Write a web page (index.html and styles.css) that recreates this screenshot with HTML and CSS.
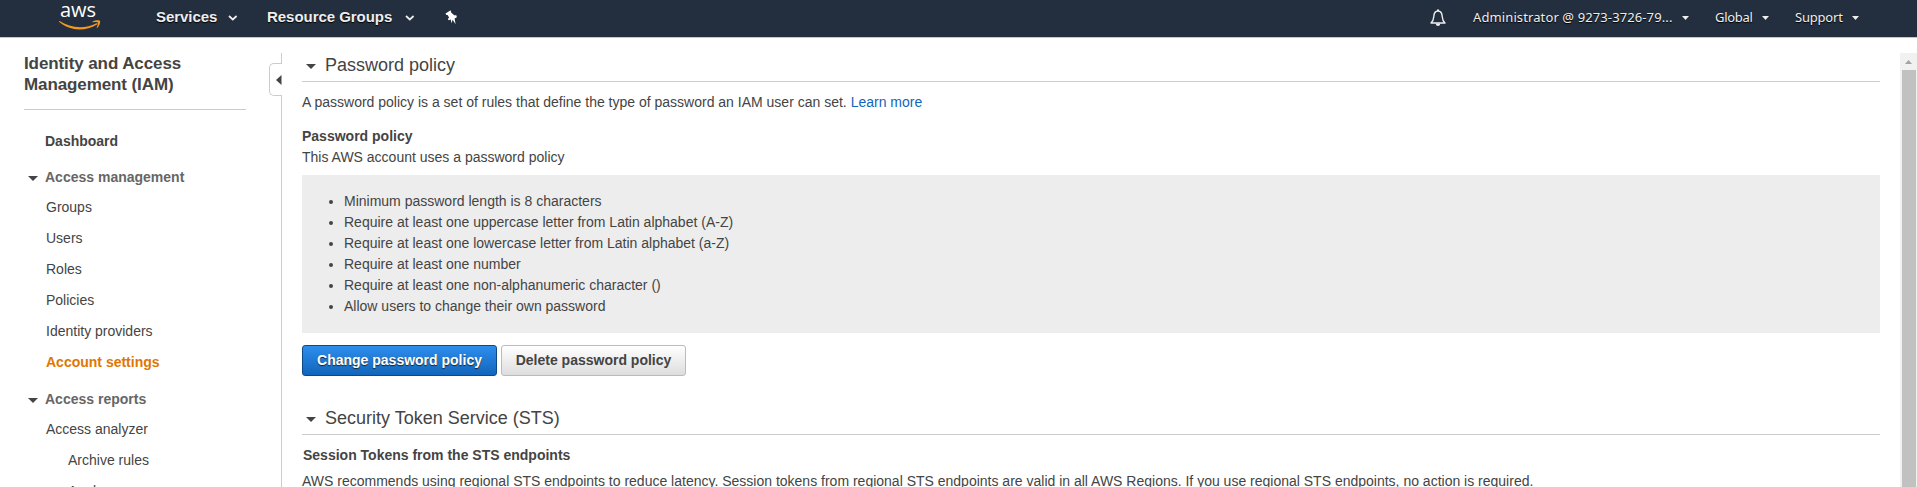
FILE: index.html
```html
<!DOCTYPE html>
<html lang="en">
<head>
<meta charset="utf-8">
<title>IAM Management Console</title>
<link rel="stylesheet" href="styles.css">
</head>
<body>
<header class="nav">
  <a class="logo">
    <span class="logo-text">aws</span>
    <svg class="logo-smile" width="42" height="11" viewBox="0 0 42 11"><path d="M.5 1.1C11 8 25.500 9.500 37.500 3.300C38.700 2.800 39 3.900 38 4.500C26 11.600 11 11.300.3 2.100C-.2 1.500 0 .8.500 1.100Z" fill="#f7981d"/><path d="M33.600 1.600C36 .2 40.200-.1 41 .9C41.500 2.300 40.600 5.800 38.200 7.900C37.800 8.200 37.500 8 37.700 7.500C38.400 5.800 39.300 3.300 38.800 2.600C38.200 1.900 35.700 2.100 34 2.300C33.400 2.400 33.200 1.900 33.600 1.600Z" fill="#f7981d"/></svg>
  </a>
  <a class="menu services">Services<svg class="chev" width="10" height="6" viewBox="0 0 10 6"><path d="M1 1l3.800 3.500L8.600 1" fill="none" stroke="#eee" stroke-width="1.700"/></svg></a>
  <a class="menu groups">Resource Groups<svg class="chev" width="10" height="6" viewBox="0 0 10 6"><path d="M1 1l3.800 3.500L8.600 1" fill="none" stroke="#eee" stroke-width="1.700"/></svg></a>
  <svg class="pin" width="13" height="15" viewBox="0 0 13 15"><path d="M5.300.5L.5 3.600L1.300 5L2.600 5L4.200 7.800L2.900 8.700L3.500 10.300L5.700 9.500L6.600 13.200L7.600 9.800L10.600 14.200L9.600 8.500L11.900 7.200L11.300 5.300L9.300 5.200L7.200 3.600L5.800 1.900L6.200 1Z" fill="#fff"/></svg>
  <div class="nav-right">
    <svg class="bell" width="16" height="18" viewBox="0 0 16 18"><path d="M1 14C3 12.300 3.600 10.500 3.800 7.500C4 3.900 5.500 2 8 2C10.500 2 12 3.900 12.200 7.500C12.400 10.500 13 12.300 15 14Z" fill="none" stroke="#eee" stroke-width="1.400" stroke-linejoin="round"/><path d="M7 2V.5h2V2M5.600 14.500h4.800Q10 17 8 17T5.600 14.500Z" fill="#eee"/></svg>
    <a class="item account">Administrator @ 9273-3726-79...<i class="caret"></i></a>
    <a class="item region">Global<i class="caret"></i></a>
    <a class="item support">Support<i class="caret"></i></a>
  </div>
</header>
<div class="layout">
  <aside class="sidebar">
    <h1>Identity and Access Management (IAM)</h1>
    <nav>
      <a class="strong dashboard">Dashboard</a>
      <a class="group first">Access management</a>
      <a>Groups</a>
      <a>Users</a>
      <a>Roles</a>
      <a>Policies</a>
      <a>Identity providers</a>
      <a class="active">Account settings</a>
      <a class="group">Access reports</a>
      <a>Access analyzer</a>
      <a class="sub">Archive rules</a>
      <a class="sub">Analyzers</a>
    </nav>
  </aside>
  <div class="divider"><button class="collapse" aria-label="Collapse"><svg width="6" height="10" viewBox="0 0 6 10"><path d="M0 5L5.500 0V10Z" fill="#444"/></svg></button></div>
  <main>
    <h2>Password policy</h2>
    <p class="intro">A password policy is a set of rules that define the type of password an IAM user can set. <a class="link">Learn more</a></p>
    <h3>Password policy</h3>
    <p class="uses">This AWS account uses a password policy</p>
    <ul>
      <li>Minimum password length is 8 characters</li>
      <li>Require at least one uppercase letter from Latin alphabet (A-Z)</li>
      <li>Require at least one lowercase letter from Latin alphabet (a-Z)</li>
      <li>Require at least one number</li>
      <li>Require at least one non-alphanumeric character ()</li>
      <li>Allow users to change their own password</li>
    </ul>
    <div class="buttons"><button class="btn primary">Change password policy</button><button class="btn">Delete password policy</button></div>
    <h2 class="sts">Security Token Service (STS)</h2>
    <h3 class="tokens">Session Tokens from the STS endpoints</h3>
    <p class="advice">AWS recommends using regional STS endpoints to reduce latency. Session tokens from regional STS endpoints are valid in all AWS Regions. If you use regional STS endpoints, no action is required.</p>
  </main>
  <div class="scrollbar"><svg width="17" height="17" viewBox="0 0 17 17"><path d="M5 11L8.500 7L12 11Z" fill="#a3a3a3"/></svg><div class="thumb"></div></div>
</div>
</body>
</html>
```

FILE: styles.css
```css
* { box-sizing: border-box; }
html, body { height: 100%; }
body {
  margin: 0;
  display: flex;
  flex-direction: column;
  overflow: hidden;
  background: #fff;
  color: #444;
  font: 14px/21px "Liberation Sans", Arial, sans-serif;
}
h1, h2, h3, p, ul { margin: 0; }

/* Top navigation */
.nav {
  flex: none;
  display: flex;
  height: 38px;
  background: #232f3e;
  border-bottom: 1px solid #c4c8cc;
  color: #eee;
}
.logo { display: flex; flex-direction: column; width: 97px; padding-left: 59px; }
.logo-text { height: 20px; padding-left: 1px; font: 20px/20px "Open Sans", sans-serif; color: #fff; }
.logo-smile { flex: none; }
.menu {
  display: flex;
  align-items: center;
  justify-content: space-between;
  height: 33px;
  font-size: 15px;
  font-weight: bold;
  letter-spacing: -.04px;
  text-shadow: 0 1px 1px #000;
  white-space: nowrap;
}
.services { margin-left: 59px; width: 111px; padding-right: 29px; }
.groups { width: 178px; padding-right: 30px; }
.chev { flex: none; margin-top: 3px; }
.pin { flex: none; margin-top: 10px; }
.nav-right {
  display: flex;
  margin-left: auto;
  font: 13px/35px "Noto Sans", sans-serif;
}
.bell { margin: 9px 27px 0 0; }
.item { display: flex; justify-content: space-between; align-items: flex-start; white-space: nowrap; text-shadow: 0 1px 1px #000; }
.account { width: 216px; margin-right: 26px; letter-spacing: .11px; }
.region { width: 54px; margin-right: 26px; letter-spacing: -.3px; }
.support { width: 64px; margin-right: 58px; letter-spacing: -.2px; }
.caret { width: 7px; height: 4px; margin-top: 16px; background: #eee; clip-path: polygon(0 0, 100% 0, 50% 100%); }

/* Page columns */
.layout { flex: 1; min-height: 0; display: flex; overflow: hidden; }
.sidebar { flex: none; width: 269px; padding: 15px 0 0 24px; }
.sidebar h1 {
  width: 222px;
  height: 57px;
  border-bottom: 1px solid #ccc;
  font-size: 17px;
  line-height: 21px;
  letter-spacing: -.1px;
}
.sidebar nav { display: flex; flex-direction: column; padding: 16px 0 0 22px; }
.sidebar nav a { flex: none; height: 31px; line-height: 31px; }
.sidebar nav .strong { font-weight: bold; }
.sidebar nav .dashboard { height: 36px; margin-left: -1px; }
.sidebar nav .group {
  display: flex;
  margin-top: 6px;
  margin-left: -18px;
  height: 30px;
  font-weight: bold;
  color: #666;
}
.sidebar nav .first { margin-top: 0; }
.group::before, h2::before {
  content: "";
  width: 10px;
  height: 5px;
  background: #444;
  clip-path: polygon(0 0, 100% 0, 50% 100%);
}
.group::before { margin: 14px 7px 0 0; }
.sidebar nav .active { font-weight: bold; color: #e07700; }
.sidebar nav .sub { padding-left: 22px; }

.divider {
  flex: none;
  width: 13px;
  margin-top: 15px;
  background: linear-gradient(#ccc, #ccc) right / 1px 100% no-repeat;
  padding-top: 10px;
}
.collapse {
  display: flex;
  align-items: center;
  justify-content: flex-end;
  width: 13px;
  height: 33px;
  padding: 0;
  border: 1px solid #ccc;
  border-right: 0;
  border-radius: 5px 0 0 5px;
  background: #fff;
}

/* Content */
main { flex: none; width: 1598px; padding: 15px 0 0 20px; white-space: nowrap; }
h2 {
  display: flex;
  width: 1578px;
  height: 29px;
  border-bottom: 1px solid #ccc;
  font-size: 18px;
  font-weight: normal;
  line-height: 24px;
}
h2::before { margin: 11px 9px 0 4px; }
h3 { font-size: 14px; line-height: 21px; }
.intro { padding: 10px 0 13px; }
.link { color: #1166bb; }
ul {
  width: 1578px;
  height: 158px;
  margin-top: 7px;
  padding: 16px 0 0 42px;
  background: #ededed;
}
.buttons { display: flex; gap: 4px; margin-top: 12px; }
.btn {
  width: 185px;
  height: 31px;
  padding: 0 0 2px;
  border: 1px solid #bbb;
  border-radius: 3px;
  background: linear-gradient(#fff, #ddd);
  color: #444;
  font: bold 14px "Liberation Sans", Arial, sans-serif;
}
.primary {
  width: 195px;
  border-color: #0b4a86;
  background: linear-gradient(#2e8ded, #1166bb);
  color: #fff;
  text-shadow: 0 1px 1px #222;
}
.sts { margin-top: 30px; }
.tokens { padding: 10px 0 5px 1px; height: 36px; }

.scrollbar { flex: none; width: 17px; margin: 15px 0 0 auto; display: flex; flex-direction: column; background: #f1f1f1; }
.scrollbar svg { flex: none; }
.thumb { flex: 1; width: 14px; margin-left: 2px; background: #c1c1c1; }
```
